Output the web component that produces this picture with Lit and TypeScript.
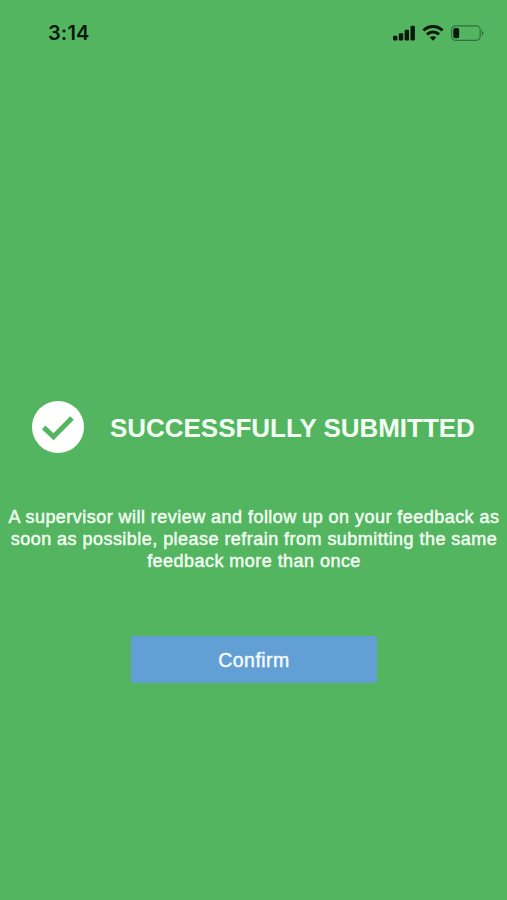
import { LitElement, html, css } from "lit";
import { customElement } from "lit/decorators.js";

@customElement("status-bar")
class StatusBar extends LitElement {
  static styles = css`
    :host {
      display: flex;
      align-items: center;
      justify-content: space-between;
      box-sizing: border-box;
      height: 66px;
      padding: 0 23px 0 48px;
      color: #06190a;
    }
    .time {
      font: 600 20px/24px Inter, sans-serif;
      letter-spacing: 0.15px;
    }
    svg {
      display: block;
    }
  `;

  render() {
    return html`
      <span class="time">3:14</span>
      <svg width="92" height="18" viewBox="0 0 92 18" fill="currentColor">
        <rect x="1" y="11.7" width="4.4" height="4.8" rx="1.2" />
        <rect x="6.8" y="9.2" width="4.4" height="7.3" rx="1.2" />
        <rect x="12.6" y="5.8" width="4.4" height="10.7" rx="1.2" />
        <rect x="18.5" y="1.8" width="4.4" height="14.7" rx="1.2" />
        <g fill="none" stroke="currentColor" stroke-width="3">
          <path d="M31.5 6.5a13.4 13.4 0 0 1 19 0" />
          <path d="M35 10.4a8.5 8.5 0 0 1 12 0" />
        </g>
        <path d="M41 16.8l-3.2-3.2a4.5 4.5 0 0 1 6.4 0z" />
        <rect x="59.6" y="1.9" width="28.6" height="14.4" rx="4" fill="none" stroke="currentColor" stroke-opacity=".45" stroke-width="1.2" />
        <rect x="61.3" y="3.9" width="5.9" height="10.4" rx="2" />
        <path d="M89.8 6.7c2 .6 2 4.2 0 4.8z" opacity=".5" />
      </svg>
    `;
  }
}

@customElement("app-root")
class AppRoot extends LitElement {
  static styles = css`
    :host {
      display: flex;
      flex-direction: column;
      height: 900px;
      background: #54b561;
      color: #f3fff3;
      font-family: "Liberation Sans", Arial, sans-serif;
      overflow: hidden;
    }
    .content {
      display: flex;
      flex-direction: column;
      align-items: center;
      padding-top: 335px;
    }
    .heading {
      display: flex;
      align-items: center;
      align-self: stretch;
      gap: 26px;
      padding-left: 32px;
    }
    .badge {
      display: block;
      flex: none;
    }
    h1 {
      margin: 0;
      padding-top: 1px;
      font-size: 26px;
      line-height: 30px;
      font-weight: 700;
      letter-spacing: -0.03px;
      white-space: nowrap;
    }
    p {
      margin: 53px 0 0 1px;
      font-size: 18px;
      line-height: 22px;
      letter-spacing: 0.46px;
      text-align: center;
      white-space: nowrap;
      -webkit-text-stroke: 0.45px currentColor;
    }
    button {
      width: 246px;
      height: 47px;
      margin: 64px 0 0 1px;
      padding: 0;
      border: 0;
      border-radius: 3px;
      background: #619fd5;
      color: #f5fbff;
      font: 19.5px/24px "Liberation Sans", Arial, sans-serif;
      letter-spacing: 0.45px;
      -webkit-text-stroke: 0.45px currentColor;
    }
  `;

  render() {
    return html`
      <status-bar></status-bar>
      <main class="content">
        <div class="heading">
          <svg class="badge" width="52" height="52" viewBox="0 0 52 52">
            <circle cx="26" cy="26" r="26" fill="#fff" />
            <path d="M11.7 26.4l9.8 9.3L40 16.9" fill="none" stroke="#54b561" stroke-width="5" />
          </svg>
          <h1>SUCCESSFULLY SUBMITTED</h1>
        </div>
        <p>
          A supervisor will review and follow up on your feedback as<br />
          soon as possible, please refrain from submitting the same<br />
          feedback more than once
        </p>
        <button>Confirm</button>
      </main>
    `;
  }
}
